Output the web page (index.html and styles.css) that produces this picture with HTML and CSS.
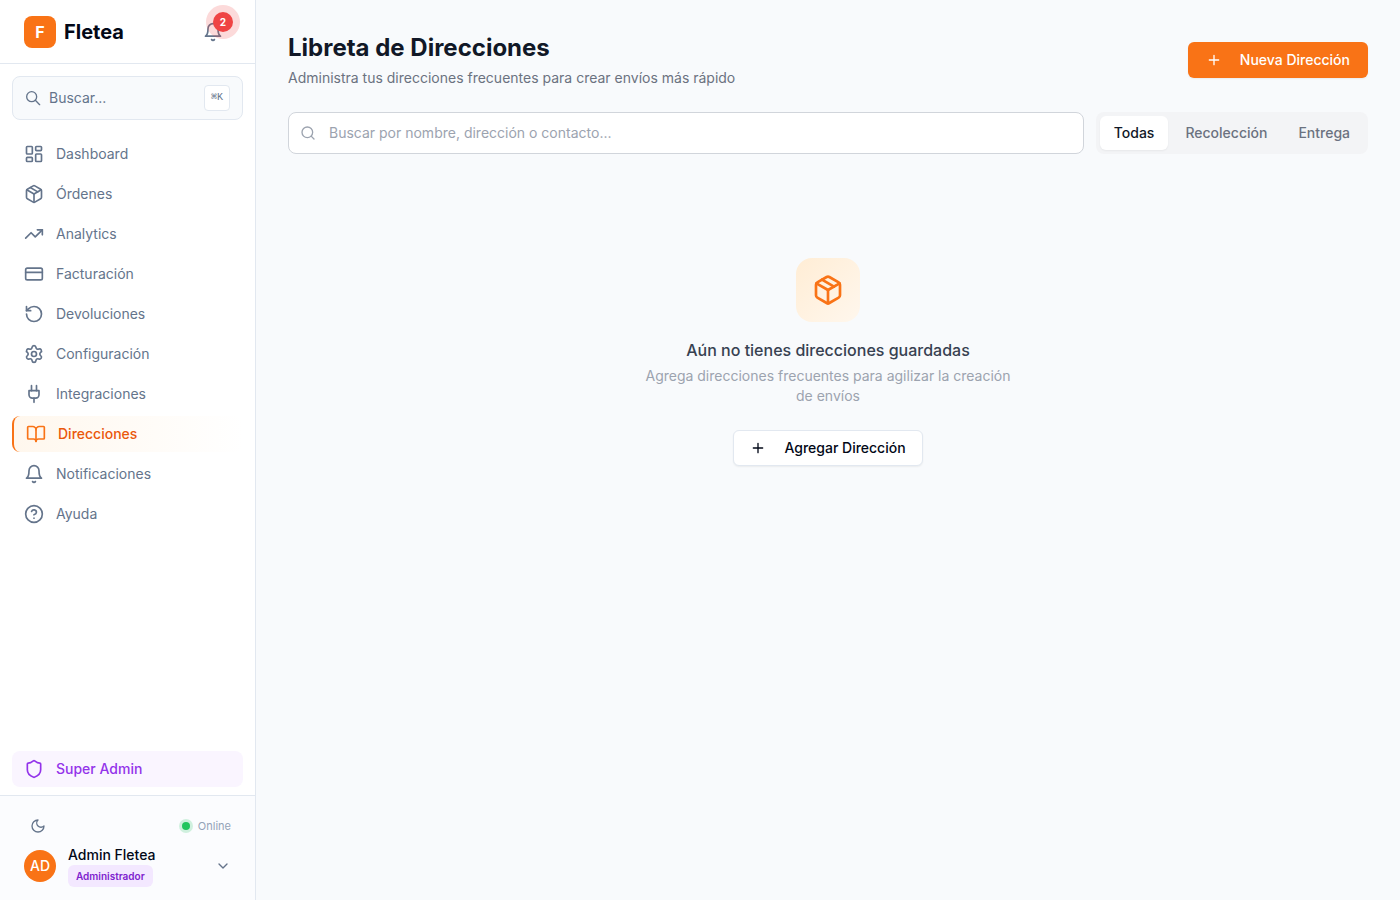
FILE: index.html
```html
<!DOCTYPE html>
<html lang="es">
<head>
<meta charset="utf-8">
<meta name="viewport" content="width=device-width, initial-scale=1">
<title>Fletea - Libreta de Direcciones</title>
<link rel="stylesheet" href="styles.css">
</head>
<body>
<svg class="sprite" aria-hidden="true">
  <symbol id="i-box" viewBox="0 0 24 24"><path d="M11 21.73a2 2 0 0 0 2 0l7-4A2 2 0 0 0 21 16V8a2 2 0 0 0-1-1.73l-7-4a2 2 0 0 0-2 0l-7 4A2 2 0 0 0 3 8v8a2 2 0 0 0 1 1.73z"/><path d="M12 22V12"/><path d="M3.3 7 12 12l8.7-5"/><path d="m7.5 4.27 9 5.15"/></symbol>
  <symbol id="i-bell" viewBox="0 0 24 24"><path d="M6 8a6 6 0 0 1 12 0c0 7 3 9 3 9H3s3-2 3-9"/><path d="M10.3 21a1.94 1.94 0 0 0 3.4 0"/></symbol>
  <symbol id="i-plus" viewBox="0 0 24 24"><path d="M5 12h14M12 5v14"/></symbol>
</svg>
<div class="app">
  <aside class="sidebar">
    <header class="brand">
      <span class="logo">F</span>
      <span class="brand-name">Fletea</span>
      <button class="bell" type="button" aria-label="Notificaciones, 2 nuevas">
        <svg class="icon"><use href="#i-bell"/></svg>
        <span class="count">2</span>
      </button>
    </header>
    <button class="quick-search" type="button">
      <svg class="icon icon-sm" viewBox="0 0 24 24"><path d="m22 22-6.500-6.500"/><circle cx="10" cy="10" r="7.500"/></svg>
      <span>Buscar...</span>
      <kbd>⌘K</kbd>
    </button>
    <nav class="nav">
      <a class="nav-item" href="#"><svg class="icon" viewBox="0 0 24 24"><rect width="7" height="9" x="3" y="3" rx="1"/><rect width="7" height="5" x="14" y="3" rx="1"/><rect width="7" height="9" x="14" y="12" rx="1"/><rect width="7" height="5" x="3" y="16" rx="1"/></svg>Dashboard</a>
      <a class="nav-item" href="#"><svg class="icon"><use href="#i-box"/></svg>Órdenes</a>
      <a class="nav-item" href="#"><svg class="icon" viewBox="0 0 24 24"><path d="m22 7-8.500 8.500-5-5L2 17"/><path d="M16 7h6v6"/></svg>Analytics</a>
      <a class="nav-item" href="#"><svg class="icon" viewBox="0 0 24 24"><rect width="20" height="14" x="2" y="5" rx="2"/><path d="M2 10h20"/></svg>Facturación</a>
      <a class="nav-item" href="#"><svg class="icon" viewBox="0 0 24 24"><path d="M3 12a9 9 0 1 0 9-9 9.750 9.750 0 0 0-6.740 2.740L3 8"/><path d="M3 3v5h5"/></svg>Devoluciones</a>
      <a class="nav-item" href="#"><svg class="icon" viewBox="0 0 24 24"><path d="M9.671 4.136a2.340 2.340 0 0 1 4.659 0 2.340 2.340 0 0 0 3.319 1.915 2.340 2.340 0 0 1 2.330 4.033 2.340 2.340 0 0 0 0 3.831 2.340 2.340 0 0 1-2.330 4.033 2.340 2.340 0 0 0-3.319 1.915 2.340 2.340 0 0 1-4.659 0 2.340 2.340 0 0 0-3.320-1.915 2.340 2.340 0 0 1-2.330-4.033 2.340 2.340 0 0 0 0-3.831A2.340 2.340 0 0 1 6.350 6.051a2.340 2.340 0 0 0 3.319-1.915"/><circle cx="12" cy="12" r="3"/></svg>Configuración</a>
      <a class="nav-item" href="#"><svg class="icon" viewBox="0 0 24 24"><path d="M12 22v-5"/><path d="M9 8V2"/><path d="M15 8V2"/><path d="M18 8v5a4 4 0 0 1-4 4h-4a4 4 0 0 1-4-4V8Z"/></svg>Integraciones</a>
      <a class="nav-item active" href="#" aria-current="page"><svg class="icon" viewBox="0 0 24 24"><path d="M12 7v14"/><path d="M3 18a1 1 0 0 1-1-1V4a1 1 0 0 1 1-1h5a4 4 0 0 1 4 4 4 4 0 0 1 4-4h5a1 1 0 0 1 1 1v13a1 1 0 0 1-1 1h-6a3 3 0 0 0-3 3 3 3 0 0 0-3-3z"/></svg>Direcciones</a>
      <a class="nav-item" href="#"><svg class="icon"><use href="#i-bell"/></svg>Notificaciones</a>
      <a class="nav-item" href="#"><svg class="icon" viewBox="0 0 24 24"><circle cx="12" cy="12" r="10"/><path d="M9.090 9a3 3 0 0 1 5.830 1c0 2-3 3-3 3"/><path d="M12 17h.01"/></svg>Ayuda</a>
    </nav>
    <div class="admin">
      <a class="nav-item super" href="#"><svg class="icon" viewBox="0 0 24 24"><path d="M20 13c0 5-3.500 7.500-7.660 8.950a1 1 0 0 1-.67-.01C7.500 20.500 4 18 4 13V6a1 1 0 0 1 1-1c2 0 4.500-1.200 6.240-2.720a1.170 1.170 0 0 1 1.520 0C14.510 3.810 17 5 19 5a1 1 0 0 1 1 1z"/></svg>Super Admin</a>
    </div>
    <footer class="account">
      <div class="status-row">
        <button class="theme" type="button" aria-label="Modo oscuro"><svg class="icon icon-sm" viewBox="0 0 24 24"><path d="M12 3a6 6 0 0 0 9 9 9 9 0 1 1-9-9Z"/></svg></button>
        <span class="online"><span class="dot"></span>Online</span>
      </div>
      <button class="user" type="button">
        <span class="avatar">AD</span>
        <span class="user-text"><span class="user-name">Admin Fletea</span><span class="role">Administrador</span></span>
        <svg class="icon icon-sm" viewBox="0 0 24 24"><path d="m6 9 6 6 6-6"/></svg>
      </button>
    </footer>
  </aside>
  <main class="main">
    <header class="page-head">
      <div>
        <h1>Libreta de Direcciones</h1>
        <p>Administra tus direcciones frecuentes para crear envíos más rápido</p>
      </div>
      <button class="btn primary" type="button"><svg class="icon icon-sm"><use href="#i-plus"/></svg>Nueva Dirección</button>
    </header>
    <div class="filters">
      <label class="search">
        <svg class="icon icon-sm" viewBox="0 0 24 24"><circle cx="11" cy="11" r="8"/><path d="m21 21-4.3-4.3"/></svg>
        <input type="text" aria-label="Buscar direcciones" placeholder="Buscar por nombre, dirección o contacto...">
      </label>
      <div class="tabs">
        <button class="tab selected" type="button" aria-pressed="true">Todas</button>
        <button class="tab" type="button" aria-pressed="false">Recolección</button>
        <button class="tab" type="button" aria-pressed="false">Entrega</button>
      </div>
    </div>
    <section class="empty">
      <span class="empty-icon"><svg class="icon icon-lg"><use href="#i-box"/></svg></span>
      <h2>Aún no tienes direcciones guardadas</h2>
      <p>Agrega direcciones frecuentes para agilizar la creación de envíos</p>
      <button class="btn outline" type="button"><svg class="icon icon-sm"><use href="#i-plus"/></svg>Agregar Dirección</button>
    </section>
  </main>
</div>
</body>
</html>
```
FILE: styles.css
```css
* { box-sizing: border-box; }
body {
  margin: 0;
  font-family: Inter, "Liberation Sans", sans-serif;
  font-size: 14px;
  line-height: 20px;
  color: #020817;
  background: #f8fafc;
}
h1, h2, p { margin: 0; }
button, input { font: inherit; color: inherit; }
button { border: 0; padding: 0; background: none; cursor: pointer; }
a { text-decoration: none; }
.sprite { display: none; }
.icon {
  width: 20px;
  height: 20px;
  flex: none;
  fill: none;
  stroke: currentColor;
  stroke-width: 2;
  stroke-linecap: round;
  stroke-linejoin: round;
}
.icon-sm { width: 16px; height: 16px; }
.icon-lg { width: 32px; height: 32px; }

.app { display: flex; min-height: 100vh; }
.sidebar {
  width: 256px;
  flex: none;
  display: flex;
  flex-direction: column;
  background: #fff;
  border-right: 1px solid #e2e8f0;
}
.brand {
  height: 64px;
  display: flex;
  align-items: center;
  gap: 8px;
  padding: 0 24px;
  border-bottom: 1px solid #e2e8f0;
}
.logo {
  width: 32px;
  height: 32px;
  display: grid;
  place-items: center;
  border-radius: 8px;
  background: #f97316;
  color: #fff;
  font-size: 16px;
  font-weight: 700;
}
.brand-name { font-size: 20px; line-height: 28px; font-weight: 700; }
.bell {
  position: relative;
  display: grid;
  place-items: center;
  width: 36px;
  height: 36px;
  margin-left: auto;
  color: #64748b;
}
.count {
  position: absolute;
  top: -2px;
  right: -2px;
  width: 20px;
  height: 20px;
  border-radius: 50%;
  background: #ef4444;
  box-shadow: 0 0 0 7px rgba(239, 68, 68, 0.2);
  color: #fff;
  font-size: 10px;
  font-weight: 700;
}
.quick-search {
  height: 44px;
  margin: 12px 12px 0;
  padding: 0 12px;
  display: flex;
  align-items: center;
  gap: 8px;
  border: 1px solid #e2e8f0;
  border-radius: 8px;
  background: #f8fafc;
  color: #64748b;
}
kbd {
  margin-left: auto;
  width: 26px;
  height: 26px;
  border: 1px solid #e2e8f0;
  border-radius: 4px;
  background: #fff;
  font-family: "Liberation Mono", monospace;
  font-size: 10px;
  line-height: 24px;
}
.nav {
  flex: 1;
  display: flex;
  flex-direction: column;
  gap: 4px;
  padding: 16px 12px;
}
.nav-item {
  height: 36px;
  display: flex;
  align-items: center;
  gap: 12px;
  padding: 0 12px;
  border-radius: 8px;
  color: #64748b;
}
.nav-item.active {
  border-left: 2px solid #f97316;
  background: linear-gradient(to right, #fff7ed, rgba(255, 247, 237, 0));
  color: #ea580c;
  font-weight: 500;
}
.active .icon { color: #f97316; }
.admin { padding: 0 12px 8px; }
.nav-item.super { background: #faf5ff; color: #9333ea; font-weight: 500; }
.account {
  padding: 16px 12px 13px;
  border-top: 1px solid #e2e8f0;
  background: #fbfcfe;
}
.status-row {
  display: flex;
  justify-content: space-between;
  align-items: center;
  padding: 0 12px;
}
.theme { width: 28px; height: 28px; display: grid; place-items: center; color: #64748b; }
.online {
  display: flex;
  align-items: center;
  gap: 8px;
  color: #94a3b8;
  font-size: 11px;
}
.dot {
  width: 8px;
  height: 8px;
  border-radius: 50%;
  background: #22c55e;
  box-shadow: 0 0 0 3px rgba(34, 197, 94, 0.2);
}
.user {
  width: 100%;
  margin-top: 5px;
  padding: 0 12px;
  display: flex;
  align-items: center;
  gap: 12px;
  text-align: left;
}
.user .icon { margin-left: auto; color: #64748b; }
.avatar {
  width: 32px;
  height: 32px;
  display: grid;
  place-items: center;
  border-radius: 50%;
  background: #f97316;
  color: #fff;
  font-weight: 500;
}
.user-text { display: flex; flex-direction: column; align-items: flex-start; }
.user-name { font-weight: 500; line-height: 20px; }
.role {
  padding: 0 8px;
  border-radius: 6px;
  background: #f3e8ff;
  color: #7e22ce;
  font-size: 10px;
  line-height: 22px;
  font-weight: 600;
}

.main { flex: 1; min-width: 0; padding: 32px; }
.page-head { display: flex; align-items: center; justify-content: space-between; gap: 16px; }
h1 { font-size: 24px; line-height: 32px; font-weight: 700; color: #111827; }
.page-head p { margin-top: 4px; color: #6b7280; }
.btn {
  height: 36px;
  display: inline-flex;
  align-items: center;
  gap: 18px;
  padding: 0 18px;
  border-radius: 6px;
  font-weight: 500;
  box-shadow: 0 1px 2px rgba(0, 0, 0, 0.06);
}
.primary { background: #f97316; color: #fff; }
.outline { padding: 0 16px; background: #fff; border: 1px solid #e2e8f0; }
.filters { display: flex; gap: 12px; margin-top: 24px; }
.search {
  flex: 1;
  height: 42px;
  display: flex;
  align-items: center;
  gap: 13px;
  padding: 0 11px;
  border: 1px solid #d1d5db;
  border-radius: 8px;
  background: #fff;
  color: #9ca3af;
}
.search:focus-within { border-color: #f97316; }
.search input {
  flex: 1;
  min-width: 0;
  padding: 0;
  border: 0;
  outline: 0;
  background: none;
  color: #111827;
}
.search input::placeholder { color: #9ca3af; opacity: 1; }
.tabs { display: flex; gap: 3px; padding: 4px; border-radius: 8px; background: #f3f4f6; }
.tab { padding: 0 14px; border-radius: 6px; font-weight: 500; color: #6b7280; }
.tab.selected { background: #fff; color: #111827; box-shadow: 0 1px 2px rgba(0, 0, 0, 0.05); }
.empty {
  display: flex;
  flex-direction: column;
  align-items: center;
  margin-top: 24px;
  padding: 80px 16px;
  text-align: center;
}
.empty-icon {
  width: 64px;
  height: 64px;
  display: grid;
  place-items: center;
  border-radius: 16px;
  background: linear-gradient(to bottom right, #ffedd5, #fff7ed);
  color: #f97316;
}
h2 { margin-top: 16px; font-size: 16px; line-height: 24px; font-weight: 500; color: #374151; }
.empty p { max-width: 384px; margin: 4px 0 24px; color: #9ca3af; }
```
